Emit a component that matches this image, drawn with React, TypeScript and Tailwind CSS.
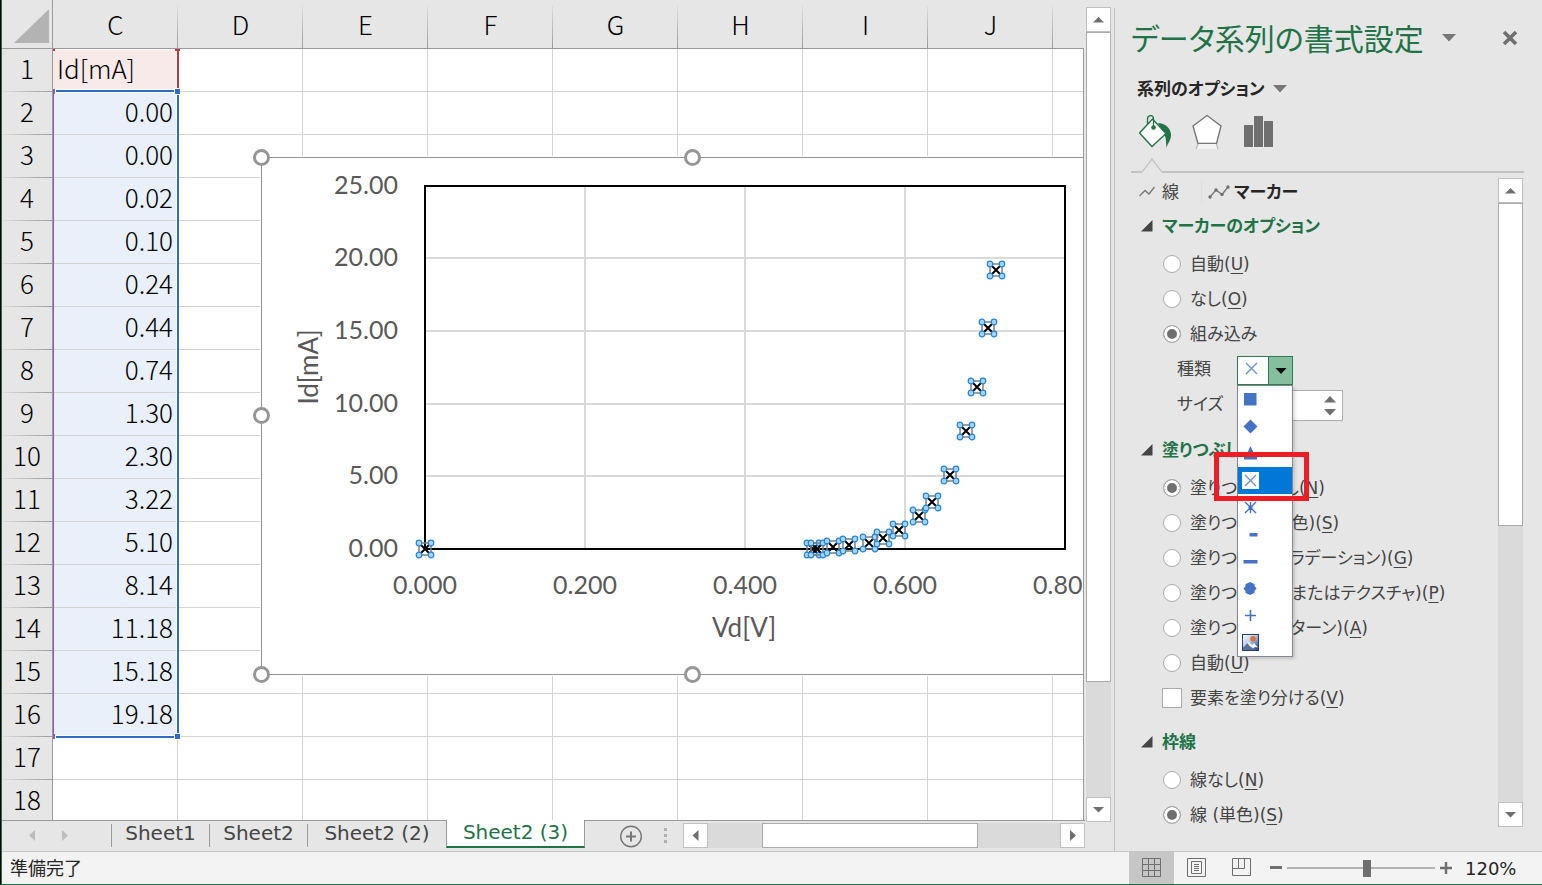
import { useState, type ReactNode } from "react";

const columns = ["C", "D", "E", "F", "G", "H", "I", "J", ""];
const values = [
  "0.00", "0.00", "0.02", "0.10", "0.24", "0.44", "0.74", "1.30",
  "2.30", "3.22", "5.10", "8.14", "11.18", "15.18", "19.18",
];
const rowNumbers = Array.from({ length: 18 }, (_, i) => i + 1);

const points: [number, number][] = [
  [425, 549], [813, 549], [817, 549], [833, 547], [849, 545], [869, 543],
  [883, 538], [899, 530], [919, 516], [932, 502], [950, 475], [966, 431],
  [977, 387], [988, 328], [996, 270],
];

function cellClass(col: number, row: number) {
  if (col === 0 && row === 1) return "bg-[#f9eaea] text-left pl-1";
  if (col === 0 && row <= 16) return "bg-[#e9f0fa] border-[#c3c9d6] text-right pr-1";
  return "bg-white";
}

function Grid() {
  return (
    <table className="w-[1176px] table-fixed border-separate border-spacing-0 font-['Noto_Sans_CJK_JP',sans-serif] text-[26px] leading-9 font-light text-black">
      <colgroup>
        <col className="w-[51px]" />
        {columns.map((_, i) => (
          <col key={i} className="w-[125px]" />
        ))}
      </colgroup>
      <thead>
        <tr>
          <th className="h-[49px] border-r border-b border-[#9b9b9b] bg-[#e6e6e6] p-0">
            <svg className="ml-3 mt-1 block" width="36" height="36" aria-hidden="true">
              <path d="M35 1V35H0Z" fill="#b3b3b3" />
            </svg>
          </th>
          {columns.map((c, i) => (
            <th
              key={i}
              className="h-[49px] border-b border-[#9b9b9b] bg-[#e6e6e6] bg-[linear-gradient(to_bottom,#dddddd,#9b9b9b)] bg-[length:1px_42px] bg-right-bottom bg-no-repeat p-0 font-light"
            >
              {c}
            </th>
          ))}
        </tr>
      </thead>
      <tbody>
        {rowNumbers.map((r) => (
          <tr key={r}>
            <th className="h-[43px] border-r border-[#9b9b9b] bg-[#e6e6e6] bg-[linear-gradient(to_right,#dddddd,#9b9b9b)] bg-[length:100%_1px] bg-bottom bg-no-repeat p-0 pb-[5px] font-light">
              {r}
            </th>
            {columns.map((_, i) => (
              <td key={i} className={`h-[43px] border-r border-b border-[#d4d4d4] p-0 pb-1 ${cellClass(i, r)}`}>
                {i === 0 ? (r === 1 ? "Id[mA]" : values[r - 2]) : null}
              </td>
            ))}
          </tr>
        ))}
      </tbody>
    </table>
  );
}

function RangeOutline() {
  return (
    <svg
      className="pointer-events-none absolute left-[48px] top-[45px]"
      width="140"
      height="700"
      viewBox="50 45 140 700"
      aria-hidden="true"
    >
      <g fill="#fff">
        <rect x="176" y="49" width="1" height="689" />
        <rect x="54" y="89" width="123" height="4" />
        <rect x="54" y="735" width="123" height="4" />
        <rect x="54" y="49" width="123" height="1" />
      </g>
      <rect x="177" y="49" width="2" height="42" fill="#c0373f" />
      <rect x="175" y="49" width="5" height="2" fill="#c0373f" />
      <rect x="53" y="49" width="2" height="2" fill="#c0373f" />
      <rect x="53" y="92" width="1" height="645" fill="#8a5cb8" />
      <rect x="56" y="90" width="121" height="2" fill="#2f6bc9" />
      <rect x="56" y="736" width="121" height="2" fill="#2f6bc9" />
      <rect x="177" y="92" width="2" height="644" fill="#2f6bc9" />
      <rect x="174" y="88" width="7" height="7" fill="#fff" />
      <rect x="175" y="89" width="5" height="5" fill="#2f6bc9" />
      <rect x="174" y="733" width="7" height="7" fill="#fff" />
      <rect x="175" y="734" width="5" height="5" fill="#2f6bc9" />
      <rect x="53" y="89" width="2" height="5" fill="#8a5cb8" />
      <rect x="53" y="734" width="2" height="5" fill="#8a5cb8" />
    </svg>
  );
}

function Chart() {
  return (
    <svg
      className="absolute left-[250px] top-[145px] font-['Lato',sans-serif] text-[25px]"
      width="880"
      height="545"
      viewBox="252 145 880 545"
      role="img"
      aria-label="Id[mA] / Vd[V]"
    >
      <rect x="260" y="156" width="865" height="520" fill="#fff" />
      <rect x="261.5" y="157.5" width="862" height="517" fill="#fff" stroke="#949494" />
      <g stroke="#d9d9d9" strokeWidth="2">
        {[258, 331, 404, 476].map((y) => (
          <line key={y} x1="426" x2="1064" y1={y} y2={y} />
        ))}
        {[585, 745, 905].map((x) => (
          <line key={x} x1={x} x2={x} y1="187" y2="548" />
        ))}
      </g>
      <rect x="425" y="186" width="640" height="363" fill="none" stroke="#000" strokeWidth="2" />
      <g fill="#595959">
        {["25.00", "20.00", "15.00", "10.00", "5.00", "0.00"].map((t, i) => (
          <text key={t} x="398" y={[194, 266, 339, 412, 484, 557][i]} textAnchor="end">
            {t}
          </text>
        ))}
        {["0.000", "0.200", "0.400", "0.600", "0.800"].map((t, i) => (
          <text key={t} x={425 + 160 * i} y="594" textAnchor="middle">
            {t}
          </text>
        ))}
        <g className="text-[26px]">
          <text x="744" y="637" textAnchor="middle">Vd[V]</text>
          <text x="0" y="0" textAnchor="middle" transform="translate(318 367) rotate(-90)">Id[mA]</text>
        </g>
      </g>
      {points.map(([x, y]) => (
        <g key={`${x}-${y}`} transform={`translate(${x} ${y})`}>
          <rect x="-6" y="-6" width="12" height="12" fill="none" stroke="#7f7f7f" strokeWidth="1.5" />
          <path d="M-4-4L4 4M4-4L-4 4" stroke="#000" strokeWidth="2" />
          <g fill="#a9d3f5" stroke="#1f86dc" strokeWidth="1.2">
            <circle cx="-6" cy="-6" r="2.8" />
            <circle cx="6" cy="-6" r="2.8" />
            <circle cx="-6" cy="6" r="2.8" />
            <circle cx="6" cy="6" r="2.8" />
          </g>
        </g>
      ))}
      <g fill="#fff" stroke="#969696" strokeWidth="3">
        {[
          [261.5, 157.5], [692.5, 157.5], [261.5, 415.5], [261.5, 674.5], [692.5, 674.5],
        ].map(([x, y]) => (
          <circle key={`${x}-${y}`} cx={x} cy={y} r="7" />
        ))}
      </g>
    </svg>
  );
}

function ScrollButton({ dir, label }: { dir: "up" | "down" | "left" | "right"; label: string }) {
  const d = {
    up: "M6 14.5L11.5 9L17 14.5Z",
    down: "M6 9L11.5 14.5L17 9Z",
    left: "M14.5 6L8.5 11.5L14.5 17Z",
    right: "M9 6L15 11.5L9 17Z",
  }[dir];
  return (
    <button type="button" aria-label={label} className="size-[25px] shrink-0 border border-[#c0c0c0] bg-white">
      <svg width="23" height="23" className="block" aria-hidden="true">
        <path d={d} fill="#6f6f6f" />
      </svg>
    </button>
  );
}

const sheets = [
  { name: "Sheet1", width: "w-[98px]" },
  { name: "Sheet2", width: "w-[98px]" },
  { name: "Sheet2 (2)", width: "w-[139px]" },
];

function SheetTabs() {
  return (
    <div className="flex h-[31px] shrink-0 pr-[29px] font-['DejaVu_Sans',sans-serif] text-[20px] leading-6 text-[#444]">
      <div className="flex w-[109px] border-t border-[#9b9b9b] pl-[26px] pt-[9px]">
        <svg width="42" height="12" aria-hidden="true">
          <path d="M7 0V11L1 5.5ZM34 0V11L40 5.5Z" fill="#bdbdbd" />
        </svg>
      </div>
      {sheets.map((s) => (
        <div key={s.name} className="border-t border-[#9b9b9b] pt-[3px]">
          <button
            type="button"
            className={`flex h-[23px] items-center justify-center whitespace-nowrap border-l border-[#9b9b9b] pb-[6px] ${s.width}`}
          >
            {s.name}
          </button>
        </div>
      ))}
      <button
        type="button"
        className="h-7 w-[139px] whitespace-nowrap border-x border-b-2 border-x-[#9b9b9b] border-b-[#217346] bg-white pb-[2px] text-[#217346]"
      >
        Sheet2 (3)
      </button>
      <div className="flex min-w-0 flex-1 border-t border-[#9b9b9b] pl-[34px] pt-1">
        <button type="button" aria-label="新しいシート" className="h-6 w-6">
          <svg width="24" height="24" className="block" aria-hidden="true" fill="none" stroke="#777">
            <circle cx="12" cy="11.5" r="10.3" strokeWidth="1.4" />
            <path d="M7 11.5H17M12 6.5V16.5" strokeWidth="2" />
          </svg>
        </button>
        <svg className="ml-[21px]" width="4" height="20" aria-hidden="true" fill="#b0b0b0">
          <path d="M0 3h3v3h-3zM0 9h3v3h-3zM0 15h3v3h-3z" />
        </svg>
      </div>
      <div className="flex w-[402px] shrink-0 border-t border-[#9b9b9b] pt-[2px]">
        <ScrollButton dir="left" label="左へスクロール" />
        <div className="h-[25px] flex-1 bg-[#dadada] pl-[54px]">
          <div className="h-[25px] w-[216px] border border-[#ababab] bg-white" />
        </div>
        <ScrollButton dir="right" label="右へスクロール" />
      </div>
    </div>
  );
}

function Choice({
  name,
  type = "radio",
  checked = false,
  mark,
  children,
}: {
  name: string;
  type?: "radio" | "checkbox";
  checked?: boolean;
  mark?: string;
  children: ReactNode;
}) {
  return (
    <label className="flex h-[35px] items-center whitespace-nowrap pl-[32px] text-[#444]">
      {type === "radio" ? (
        <input
          type="radio"
          name={name}
          defaultChecked={checked}
          className="size-[18px] shrink-0 appearance-none rounded-full border border-[#ababab] bg-white checked:bg-[#6f6f6f] checked:shadow-[inset_0_0_0_3px_white]"
        />
      ) : (
        <input
          type="checkbox"
          name={name}
          className="-mx-px size-5 shrink-0 appearance-none border border-[#ababab] bg-white checked:bg-[#6f6f6f]"
        />
      )}
      <span className="ml-[9px]">
        {children}
        {mark ? (
          <>
            (<span className="underline decoration-1 underline-offset-3">{mark}</span>)
          </>
        ) : null}
      </span>
    </label>
  );
}

function SectionTitle({ children }: { children: ReactNode }) {
  return (
    <button type="button" className="flex h-10 items-center whitespace-nowrap pl-[10px] font-bold text-[#217346]">
      <svg width="12" height="12" className="mr-[9px]" aria-hidden="true">
        <path d="M11.5 0V11.5H0Z" fill="#444" />
      </svg>
      {children}
    </button>
  );
}

const markers: { name: string; icon: ReactNode }[] = [
  { name: "四角形", icon: <rect x="2" y="2" width="12.5" height="12.5" fill="#4472c4" /> },
  { name: "ひし形", icon: <path d="M8.5 1.5L15.5 8.5L8.5 15.5L1.5 8.5Z" fill="#4472c4" /> },
  { name: "三角形", icon: <path d="M8.5 1L11.5 7.5L15 12V14.5H2V12L5.5 7.5Z" fill="#4472c4" /> },
  { name: "×", icon: <path d="M3 3L14 14M14 3L3 14" stroke="#6f93d6" strokeWidth="1.4" /> },
  {
    name: "アスタリスク",
    icon: <path d="M3 3L14 14M14 3L3 14M8.5 3V14M6.5 8.5H10.5" stroke="#4472c4" strokeWidth="1.4" />,
  },
  { name: "短い横線", icon: <rect x="7.5" y="7" width="8" height="3.5" fill="#4472c4" /> },
  { name: "長い横線", icon: <rect x="1.5" y="7" width="14" height="3.5" fill="#4472c4" /> },
  {
    name: "円",
    icon: (
      <path
        d="M6 3L8 2L10 3L12.5 4V6L14.5 8.5L12.5 11V13L10 14L8 15L6 14L3.5 13V11L1.5 8.5L3.5 6V4Z"
        fill="#4472c4"
      />
    ),
  },
  { name: "プラス", icon: <path d="M3 8.5H14M8.5 3V14" stroke="#4472c4" strokeWidth="1.6" /> },
  {
    name: "図",
    icon: (
      <>
        <defs>
          <linearGradient id="sky" x1="0" y1="0" x2="1" y2="1">
            <stop offset="0" stopColor="#fff" />
            <stop offset="0.45" stopColor="#b9cbe8" />
            <stop offset="1" stopColor="#123a80" />
          </linearGradient>
        </defs>
        <rect x="0.5" y="0.5" width="16" height="16" fill="url(#sky)" stroke="#24406f" />
        <circle cx="11" cy="4.8" r="2.8" fill="#e0703a" />
        <path d="M1 14L6 7.5L10 11L12 9L16 13.5L13 13L11 14.5L7 11.5L3 15Z" fill="#eef3fb" />
        <path d="M1 16V13.5L5.5 9L7.5 12L11.5 15L15.5 16Z" fill="#5d7299" />
      </>
    ),
  },
];

function MarkerPicker() {
  const [open, setOpen] = useState(true);
  const [selected, setSelected] = useState(3);
  return (
    <div className="relative w-14">
      <button
        type="button"
        id="marker-type"
        aria-haspopup="listbox"
        aria-expanded={open}
        onClick={() => setOpen(!open)}
        className="flex h-[29px] w-14 border border-[#2f7d53] bg-white"
      >
        <svg className="ml-[5px] mt-[3px]" width="17" height="17" aria-hidden="true">
          {markers[selected].icon}
        </svg>
        <span className="ml-auto flex h-[27px] w-6 items-center justify-center border-l border-[#2f7d53] bg-[#86bf9f]">
          <svg width="12" height="6" aria-hidden="true">
            <path d="M0.5 0H11.5L6 6Z" fill="#000" />
          </svg>
        </span>
      </button>
      {open && (
        <ul
          role="listbox"
          aria-labelledby="marker-type-label"
          className="absolute left-0 top-full z-10 w-14 border border-[#828790] bg-white shadow-[2px_2px_3px_rgba(0,0,0,0.15)]"
        >
          {markers.map((m, i) => (
            <li
              key={m.name}
              role="option"
              aria-label={m.name}
              aria-selected={i === selected}
              onClick={() => setSelected(i)}
              className={`relative flex h-[27px] items-center pl-1 ${i === selected ? "bg-[#0078d7]" : ""}`}
            >
              <svg width="17" height="17" aria-hidden="true" className="bg-white">
                {m.icon}
              </svg>
            </li>
          ))}
          <li
            role="presentation"
            className="pointer-events-none absolute left-[-24px] top-[66px] h-[49px] w-[95px] border-5 border-[#ee1c24]"
          />
        </ul>
      )}
    </div>
  );
}

function PaneHeader() {
  return (
    <header className="pl-4 pr-[18px]">
      <div className="flex h-[50px] items-center pt-[29px]">
        <h1 className="whitespace-nowrap text-[30px] leading-10 text-[#217346]">データ系列の書式設定</h1>
        <button type="button" aria-label="作業ウィンドウのオプション" className="mb-[3px] ml-[18px]">
          <svg width="14" height="8" className="block" aria-hidden="true">
            <path d="M0 0H14L7 7.5Z" fill="#777" />
          </svg>
        </button>
        <button type="button" aria-label="閉じる" className="mb-[3px] ml-auto mr-[5px]">
          <svg width="18" height="18" className="block" aria-hidden="true">
            <path d="M3 3L15 15M15 3L3 15" stroke="#6f6f6f" strokeWidth="3.6" />
          </svg>
        </button>
      </div>
      <button
        type="button"
        className="mt-[26px] flex h-[26px] items-center gap-2 whitespace-nowrap pl-[6px] font-bold text-[#262626]"
      >
        系列のオプション
        <svg width="14" height="8" aria-hidden="true">
          <path d="M0 0H14L7 7.5Z" fill="#777" />
        </svg>
      </button>
      <div className="mt-[10px] flex h-[40px] gap-[18px] pl-2">
        <button type="button" aria-label="塗りつぶしと線" className="h-10 w-[34px]">
          <svg width="34" height="38" viewBox="1 0 34 38" className="block" aria-hidden="true">
            <path d="M20 10C27 10 33 15 33 22C33 27 30 30 28.5 34.5C28 29 28.5 25 26 21Z" fill="#217346" />
            <path d="M14.5 6L28 20.5L14 33.5L1.5 20Z" fill="#fff" stroke="#217346" strokeWidth="1.4" />
            <path d="M9.5 12V6C9.5 1.5 15.5 1.5 15.5 6V14" fill="none" stroke="#217346" strokeWidth="1.3" />
            <circle cx="15.5" cy="14.5" r="2.3" fill="#217346" />
          </svg>
        </button>
        <button type="button" aria-label="効果" className="h-10 w-[34px]">
          <svg width="34" height="38" className="block" aria-hidden="true">
            <path d="M16 2.5L30 13L25.5 30.5H7L2 13Z" fill="#fff" stroke="#777" strokeWidth="1.4" />
            <path d="M7.5 31H25L27 36H5.5Z" fill="#f3f3f3" />
            <path d="M7 31L5 36M25.5 31L27 36" stroke="#b8b8b8" strokeWidth="1.2" />
          </svg>
        </button>
        <button type="button" aria-label="系列のオプション" className="h-10 w-[34px]">
          <svg width="34" height="38" className="block" aria-hidden="true" fill="#6f6f6f">
            <path d="M1 12H10V34H1ZM11 3H20V34H11ZM21 8H30V34H21Z" />
          </svg>
        </button>
      </div>
      <div className="mt-1 flex h-[17px] items-end">
        <span className="h-[2px] w-[11px] bg-[#c2c2c2]" />
        <svg width="20" height="15" aria-hidden="true" fill="none">
          <path d="M0 14L10 1L20 14" stroke="#c2c2c2" strokeWidth="1.3" />
        </svg>
        <span className="h-[2px] flex-1 bg-[#c2c2c2]" />
      </div>
    </header>
  );
}

function FormatPane() {
  return (
    <aside className="mt-2 flex w-[428px] shrink-0 flex-col border-l border-[#c2c2c2] font-['DejaVu_Sans','Noto_Sans_CJK_JP',sans-serif] text-[17px] leading-6 [font-feature-settings:'palt']">
      <div className="-mt-2">
        <PaneHeader />
      </div>
      <div className="mb-6 mt-[5px] flex min-h-0 flex-1 pl-4 pr-[19px]">
        <form className="min-w-0 flex-1">
          <div className="flex h-7 items-center pl-2">
            <button type="button" className="flex items-center gap-[7px] text-[#444]">
              <svg width="16" height="12" aria-hidden="true" fill="none">
                <path d="M0.5 10L6 4.5L10 8L15.5 1" stroke="#777" strokeWidth="1.3" />
              </svg>
              線
            </button>
            <span className="ml-[22px] h-6 w-px bg-[#dfdfdf]" />
            <button type="button" className="ml-[6px] flex items-center gap-1 font-bold text-[#262626]">
              <svg width="22" height="14" aria-hidden="true" fill="none">
                <path d="M2 12L8 5L14 9.5L20 2" stroke="#777" strokeWidth="1.3" />
                <g fill="#6f6f6f">
                  <circle cx="2" cy="12" r="1.7" />
                  <circle cx="8" cy="5" r="1.7" />
                  <circle cx="14" cy="9.5" r="1.7" />
                  <circle cx="20" cy="2" r="1.7" />
                </g>
              </svg>
              マーカー
            </button>
          </div>

          <SectionTitle>マーカーのオプション</SectionTitle>
          <Choice name="marker" mark="U">自動</Choice>
          <Choice name="marker" mark="O">なし</Choice>
          <Choice name="marker" checked>組み込み</Choice>
          <div className="mt-[2px] flex h-[35px] items-center pl-[46px] text-[#444]">
            <label id="marker-type-label" htmlFor="marker-type" className="w-[60px] pb-1">種類</label>
            <MarkerPicker />
          </div>
          <div className="flex h-[35px] items-center pl-[46px] text-[#444]">
            <label htmlFor="marker-size" className="w-[60px] pb-1">サイズ</label>
            <div className="flex h-[31px] w-[106px] items-center border border-[#ababab] bg-white">
              <input id="marker-size" type="text" inputMode="numeric" className="min-w-0 flex-1 bg-transparent px-1" />
              <div className="flex w-6 flex-col gap-[6px]">
                <button type="button" aria-label="増やす">
                  <svg width="12" height="7" className="mx-auto block" aria-hidden="true">
                    <path d="M0 6.5L6 0L12 6.5Z" fill="#6f6f6f" />
                  </svg>
                </button>
                <button type="button" aria-label="減らす">
                  <svg width="12" height="7" className="mx-auto block" aria-hidden="true">
                    <path d="M0 0L6 6.5L12 0Z" fill="#6f6f6f" />
                  </svg>
                </button>
              </div>
            </div>
          </div>

          <div className="mt-[7px]">
            <SectionTitle>塗りつぶし</SectionTitle>
            <Choice name="fill" mark="N" checked>塗りつぶしなし</Choice>
            <Choice name="fill" mark="S">塗りつぶし(単色)</Choice>
            <Choice name="fill" mark="G">塗りつぶし(グラデーション)</Choice>
            <Choice name="fill" mark="P">塗りつぶし(図またはテクスチャ)</Choice>
            <Choice name="fill" mark="A">塗りつぶし(パターン)</Choice>
            <Choice name="fill" mark="U">自動</Choice>
            <Choice name="vary" type="checkbox" mark="V">要素を塗り分ける</Choice>
          </div>

          <div className="mt-[7px]">
            <SectionTitle>枠線</SectionTitle>
            <Choice name="border" mark="N">線なし</Choice>
            <Choice name="border" mark="S" checked>線 (単色)</Choice>
          </div>
        </form>
        <div className="flex w-[25px] flex-col bg-[#dadada]">
          <ScrollButton dir="up" label="上へスクロール" />
          <div className="h-[323px] border border-[#ababab] bg-white" />
          <div className="flex-1" />
          <ScrollButton dir="down" label="下へスクロール" />
        </div>
      </div>
    </aside>
  );
}

function StatusBar() {
  return (
    <footer className="flex h-[33px] shrink-0 items-stretch border-t border-[#c6c6c6] bg-[#f3f3f3] font-['DejaVu_Sans','Noto_Sans_CJK_JP',sans-serif] text-[18px] text-[#262626]">
      <span className="flex items-center pl-2">準備完了</span>
      <div className="ml-auto flex">
        <button type="button" aria-label="標準" className="flex w-[45px] items-center justify-center bg-[#c6c6c6]">
          <svg width="20" height="20" fill="none" stroke="#6f6f6f" aria-hidden="true">
            <path d="M0.5 0.5H18.5V18.5H0.5ZM0.5 6.5H18.5M0.5 12.5H18.5M6.5 0.5V18.5M12.5 0.5V18.5" />
          </svg>
        </button>
        <button type="button" aria-label="ページ レイアウト" className="flex w-[45px] items-center justify-center">
          <svg width="20" height="20" fill="none" stroke="#6f6f6f" aria-hidden="true">
            <path d="M0.5 0.5H18.5V18.5H0.5ZM4.5 3.5H14.5V15.5H4.5ZM7 6.5H12M7 8.5H12M7 10.5H12M7 12.5H12" />
          </svg>
        </button>
        <button type="button" aria-label="改ページ プレビュー" className="flex w-[45px] items-center justify-center">
          <svg width="20" height="20" fill="none" stroke="#6f6f6f" aria-hidden="true">
            <path d="M0.5 0.5H18.5V17.5H0.5ZM0.5 10.5H12.5V0.5M6.5 0.5V10.5" />
          </svg>
        </button>
      </div>
      <div className="flex items-center pl-[6px]">
        <button type="button" aria-label="縮小">
          <svg width="12" height="12" className="block" aria-hidden="true">
            <path d="M0 5.5H12" stroke="#6f6f6f" strokeWidth="3" />
          </svg>
        </button>
        <input
          type="range"
          aria-label="ズーム"
          min={0}
          max={100}
          defaultValue={54}
          className="mx-[5px] h-5 w-[148px] appearance-none bg-transparent bg-[linear-gradient(#b3b3b3,#b3b3b3)] bg-[length:100%_2px] bg-center bg-no-repeat [&::-webkit-slider-thumb]:h-[17px] [&::-webkit-slider-thumb]:w-2 [&::-webkit-slider-thumb]:appearance-none [&::-webkit-slider-thumb]:bg-[#6f6f6f]"
        />
        <button type="button" aria-label="拡大">
          <svg width="12" height="12" className="block" aria-hidden="true">
            <path d="M0 6H12M6 0V12" stroke="#6f6f6f" strokeWidth="2.5" />
          </svg>
        </button>
        <span className="ml-[13px] w-[77px]">120%</span>
      </div>
    </footer>
  );
}

export default function App() {
  return (
    <div className="flex h-screen bg-[#e6e6e6]">
      <div className="w-px shrink-0 bg-black" />
      <div className="flex min-w-0 flex-1 flex-col border-b border-l border-[#217346]">
        <div className="flex min-h-0 flex-1">
          <section className="flex min-w-0 flex-1 flex-col">
            <div className="flex min-h-0 flex-1">
              <div className="relative min-w-0 flex-1 overflow-hidden">
                <Grid />
                <RangeOutline />
                <Chart />
                <div className="absolute bottom-0 right-0 top-[48px] w-px bg-[#9b9b9b]" />
              </div>
              <div className="-mb-[2px] ml-[2px] mr-[3px] mt-[7px] flex w-[25px] flex-col bg-[#dadada]">
                <ScrollButton dir="up" label="上へスクロール" />
                <div className="h-[650px] border border-[#ababab] bg-white" />
                <div className="flex-1" />
                <ScrollButton dir="down" label="下へスクロール" />
              </div>
            </div>
            <SheetTabs />
          </section>
          <FormatPane />
        </div>
        <StatusBar />
      </div>
    </div>
  );
}
